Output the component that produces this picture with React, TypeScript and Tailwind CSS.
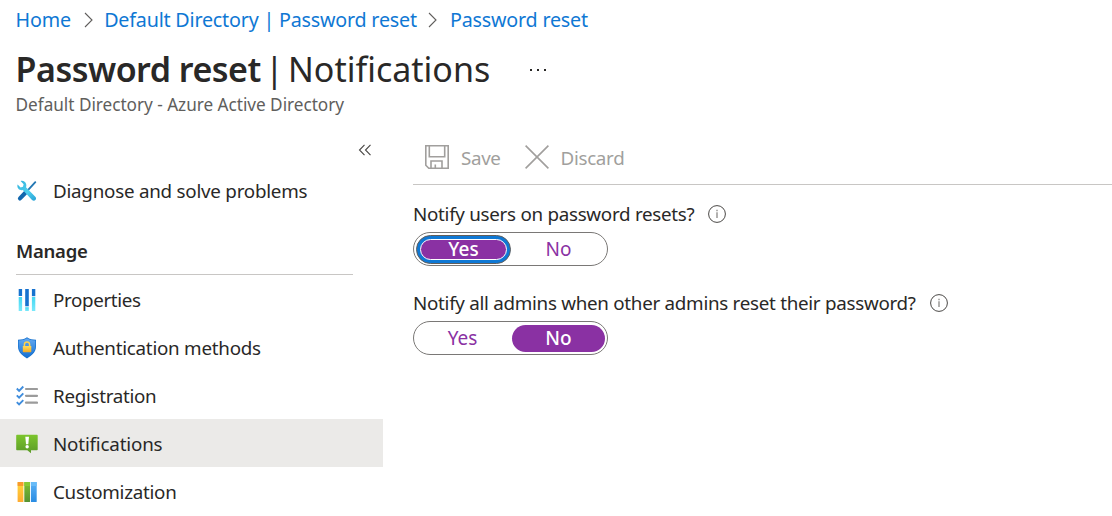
import React from "react";

function Chevron({ className }: { className: string }) {
  return (
    <svg className={`h-4 w-3 shrink-0 ${className}`} viewBox="0 0 12 16" fill="none" stroke="#605e5c" strokeWidth="1.1">
      <path d="M2 1 9 8 2 15" />
    </svg>
  );
}

function ToolsIcon() {
  return (
    <svg className="size-[22px]" viewBox="0 0 22 22" fill="none">
      <defs>
        <linearGradient id="wrench" x1="3" y1="2" x2="19" y2="20" gradientUnits="userSpaceOnUse">
          <stop stopColor="#35b5de" />
          <stop offset=".55" stopColor="#4fd0ee" />
          <stop offset="1" stopColor="#2aa5d8" />
        </linearGradient>
      </defs>
      <path d="m19.300 2.200-8.700 9.400" stroke="#2478b4" strokeWidth="1.900" strokeLinecap="round" />
      <path d="m9.400 12.800-5.400 5.600" stroke="#1267ae" strokeWidth="4.200" strokeLinecap="round" />
      <path d="M4.600 1.100 7.600 4.300 7 6.800 4.600 7.400 1.600 4.500C.8 7 2.200 9.700 4.800 10.100c.7.100 1.400 0 2-.2l9.200 10c1 1 2.500 1.100 3.400.2s.9-2.300-.1-3.300L10 7.200c.4-.9.5-1.900.2-3-.6-2.200-3.200-4-5.600-3.100Z" fill="url(#wrench)" />
    </svg>
  );
}

function PropertiesIcon() {
  return (
    <svg className="size-[22px]" viewBox="0 0 22 22">
      <defs>
        <linearGradient id="bar" x1="0" y1="0" x2="0" y2="1">
          <stop stopColor="#44d7f2" />
          <stop offset="1" stopColor="#7ae9fb" />
        </linearGradient>
      </defs>
      <rect x="2.700" y="0" width="3.400" height="7" fill="#1672cf" />
      <rect x="2.700" y="8" width="3.400" height="14" fill="url(#bar)" />
      <rect x="9.200" y="0" width="3.600" height="17.300" fill="#1672cf" />
      <rect x="9.200" y="18.200" width="3.600" height="3.800" fill="url(#bar)" />
      <rect x="15.900" y="0" width="3.400" height="7.200" fill="#1672cf" />
      <rect x="15.900" y="8" width="3.400" height="14" fill="url(#bar)" />
    </svg>
  );
}

function ShieldIcon() {
  return (
    <svg className="size-[22px]" viewBox="0 0 22 22">
      <defs>
        <linearGradient id="shield" x1="0" y1="0" x2="0" y2="1">
          <stop stopColor="#63a9f1" />
          <stop offset="1" stopColor="#1670d2" />
        </linearGradient>
        <linearGradient id="lock" x1="0" y1="0" x2="0" y2="1">
          <stop stopColor="#ffdc5d" />
          <stop offset="1" stopColor="#f2a922" />
        </linearGradient>
      </defs>
      <path d="M11 .3c2.600 2 5.400 2.300 9 2.500v6.700c0 6.200-5.400 9.700-9 12-3.600-2.300-9-5.800-9-12V2.800C5.600 2.600 8.400 2.300 11 .3Z" fill="#1672cf" />
      <path d="M11 1.300c2.600 1.800 5 2 8.300 2.200v6c0 5.600-4.900 8.800-8.300 11-3.400-2.200-8.300-5.400-8.300-11v-6C6 3.300 8.400 3.100 11 1.300Z" fill="url(#shield)" />
      <path d="M8.400 9.500V7.500a2.600 2.600 0 0 1 5.200 0v2" fill="none" stroke="#ffd24d" strokeWidth="1.500" />
      <rect x="6.800" y="8.900" width="8.500" height="6.400" rx=".7" fill="url(#lock)" />
    </svg>
  );
}

function ChecklistIcon() {
  return (
    <svg className="size-[22px]" viewBox="0 0 22 22" fill="none">
      {[4, 10.8, 17.7].map((y) => (
        <g key={y}>
          <path d={`M.8 ${y - 0.5}l2.300 2.300L7.300 ${y - 2.5}`} stroke="#3f8ddd" strokeWidth="1.900" />
          <path d={`M10 ${y}H21`} stroke="#9b9b9b" strokeWidth="2.200" strokeLinecap="round" />
        </g>
      ))}
    </svg>
  );
}

function NoticeIcon() {
  return (
    <svg className="size-[22px]" viewBox="0 0 22 22">
      <defs>
        <linearGradient id="notice" x1="0" y1="0" x2="0" y2="1">
          <stop stopColor="#7cc52c" />
          <stop offset="1" stopColor="#5b9b28" />
        </linearGradient>
      </defs>
      <path d="M.9 1.800H21c.4 0 .7.300.7.700v14c0 .4-.3.700-.7.700h-6v3.100L11.300 17.200H.9c-.4 0-.7-.3-.7-.7v-14C.2 2.100.5 1.800.9 1.800Z" fill="url(#notice)" />
      <path d="M9.300 3.800h3.700l-.7 7.500h-2.300Z" fill="#fff" />
      <circle cx="11.150" cy="13.800" r="1.700" fill="#fff" />
    </svg>
  );
}

function CustomizeIcon() {
  return (
    <svg className="size-[22px]" viewBox="0 0 22 22">
      <defs>
        <linearGradient id="orange" x1="0" y1="0" x2="0" y2="1">
          <stop stopColor="#ffd83a" />
          <stop offset="1" stopColor="#ffab31" />
        </linearGradient>
        <linearGradient id="green" x1="0" y1="0" x2="0" y2="1">
          <stop stopColor="#7fc031" />
          <stop offset="1" stopColor="#569332" />
        </linearGradient>
        <linearGradient id="blue" x1="0" y1="0" x2="0" y2="1">
          <stop stopColor="#5cb1f5" />
          <stop offset="1" stopColor="#298ce3" />
        </linearGradient>
      </defs>
      <rect x="1.600" y="1" width="5.800" height="20" rx=".5" fill="url(#orange)" />
      <rect x="1.600" y="1" width="5.800" height="4" rx=".5" fill="#f79a2d" />
      <rect x="8.300" y="1" width="5.700" height="20" rx=".5" fill="url(#green)" />
      <rect x="8.300" y="1" width="5.700" height="4" rx=".5" fill="#85ca34" />
      <rect x="14.900" y="1" width="5.800" height="20" rx=".5" fill="url(#blue)" />
      <rect x="14.900" y="1" width="5.800" height="4" rx=".5" fill="#68bbf8" />
    </svg>
  );
}

function InfoIcon() {
  return (
    <svg className="size-[18px] shrink-0" viewBox="0 0 18 18" fill="none">
      <circle cx="9" cy="9" r="8.400" stroke="#4a4846" strokeWidth="1" />
      <path d="M9 7.300V13M9 4.800v1.400" stroke="#8a8886" strokeWidth="1.300" />
    </svg>
  );
}

function SaveIcon() {
  return (
    <svg className="size-6" viewBox="0 0 24 24" fill="none" stroke="#a19f9d" strokeWidth="1.600">
      <path d="M.8.800h22.400v22.400H3.800l-3-3Z" />
      <path d="M4.300.800v11h15.400v-11M6 23v-7h11v7M10.300 23v-3.500" />
    </svg>
  );
}

function DiscardIcon() {
  return (
    <svg className="size-6" viewBox="0 0 24 24" fill="none" stroke="#a19f9d" strokeWidth="1.600">
      <path d="m.6.600 22.800 22.800M23.400.600.600 23.400" />
    </svg>
  );
}

function Toggle({ value, focused }: { value: "Yes" | "No"; focused?: boolean }) {
  return (
    <div className="flex h-[34px] w-[195px] items-center justify-between rounded-full border border-[#7a7876] px-[2px] text-[19px] text-[#8a31a3]">
      {(["Yes", "No"] as const).map((option) => {
        const selected = option === value;
        if (selected && focused) {
          return (
            <button key={option} className="h-[29px] w-[95px] rounded-full border border-[#605e5c] bg-[#0f78d4] p-[3px]">
              <span className="flex h-[21px] items-center justify-center rounded-full border-[1.5px] border-white bg-[#8a31a3] font-medium text-white">{option}</span>
            </button>
          );
        }
        return (
          <button key={option} className={`flex h-[27px] w-[93px] items-center justify-center rounded-full ${selected ? "bg-[#8a31a3] font-medium text-white" : ""}`}>
            <span>{option}</span>
          </button>
        );
      })}
    </div>
  );
}

const items = [
  { label: "Properties", icon: <PropertiesIcon />, track: "tracking-[-0.37px]" },
  { label: "Authentication methods", icon: <ShieldIcon />, track: "tracking-[-0.25px]" },
  { label: "Registration", icon: <ChecklistIcon />, track: "tracking-[-0.3px]" },
  { label: "Notifications", icon: <NoticeIcon />, track: "tracking-[-0.18px]", active: true },
  { label: "Customization", icon: <CustomizeIcon />, track: "tracking-[-0.27px]" },
];

export default function App() {
  return (
    <main className="h-[516px] w-[1112px] overflow-hidden bg-white font-['Noto_Sans',sans-serif] text-[18.8px] leading-6 text-[#292827]">
      <header className="h-[124px] pl-[15.6px]">
        <nav className="flex h-10 items-center text-[19.7px] tracking-[-0.2px] text-[#0f78d4]">
          <a>Home</a>
          <Chevron className="mr-[9.4px] ml-3" />
          <a>Default Directory | Password reset</a>
          <Chevron className="mx-[10.6px]" />
          <a>Password reset</a>
        </nav>
        <div className="flex h-[54px] items-center pt-1 text-[34px] leading-[54px]">
          <h1 className="flex">
            <span className="w-[245.4px] font-semibold tracking-[-0.5px] whitespace-nowrap">Password reset</span>
            <span className="w-[27px] text-center">|</span>
            <span>Notifications</span>
          </h1>
          <svg className="mt-[2px] ml-[39px] h-1 w-5" viewBox="0 0 20 4" fill="#292827">
            <path d="M1 1h2v2H1zM8 1h2v2H8zM15 1h2v2h-2z" />
          </svg>
        </div>
        <p className="text-[17.2px] leading-[22px] tracking-[-0.03px] text-[#605e5c]">Default Directory - Azure Active Directory</p>
      </header>
      <div className="flex">
        <aside className="w-[383px] shrink-0">
          <div className="flex h-[43px] justify-end pt-5 pr-[11px]">
            <svg className="h-3 w-[14px]" viewBox="0 0 14 12" fill="none" stroke="#484644" strokeWidth="1.100">
              <path d="m6.500.800-5 5.200 5 5.200M12.500.800l-5 5.200 5 5.200" />
            </svg>
          </div>
          <div className="flex h-12 items-center gap-[15px] pl-4 tracking-[-0.24px]">
            <ToolsIcon />
            <span>Diagnose and solve problems</span>
          </div>
          <h2 className="mr-[30px] ml-4 flex h-[60px] items-center border-b border-[#c8c6c4] pt-3 text-[18.5px] font-semibold tracking-[-0.25px]">Manage</h2>
          <ul>
            {items.map((item) => (
              <li key={item.label} className={`flex h-12 items-center gap-[15px] pt-[2px] pl-4 ${item.active ? "bg-[#ebeae8]" : ""}`}>
                {item.icon}
                <span className={item.track}>{item.label}</span>
              </li>
            ))}
          </ul>
        </aside>
        <section className="flex-1 pl-[30px]">
          <div className="flex h-[61px] items-center border-b border-[#c8c6c4] pt-[6px] pl-3 text-[#a19f9d]">
            <SaveIcon />
            <span className="mr-3 w-[64px] pt-[2px] pl-3 tracking-[-0.35px]">Save</span>
            <DiscardIcon />
            <span className="pt-[2px] pl-[11.5px] tracking-[-0.3px]">Discard</span>
          </div>
          <div className="flex items-center gap-[14px] pt-[17px] pb-[6px] tracking-[-0.28px]">
            <span>Notify users on password resets?</span>
            <InfoIcon />
          </div>
          <Toggle value="Yes" focused />
          <div className="flex items-center gap-[14px] pt-[25px] pb-[6px] tracking-[-0.28px]">
            <span>Notify all admins when other admins reset their password?</span>
            <InfoIcon />
          </div>
          <Toggle value="No" />
        </section>
      </div>
    </main>
  );
}
